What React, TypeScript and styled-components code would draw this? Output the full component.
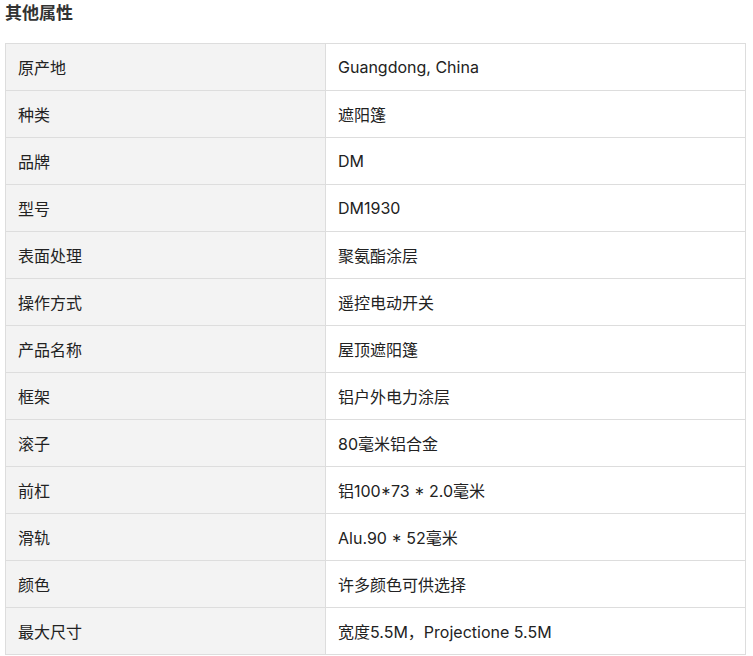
import React from "react";
import styled, { createGlobalStyle } from "styled-components";

const Global = createGlobalStyle`
  html, body { margin: 0; padding: 0; background: #fff; }
  body { font-family: Inter, "Noto Sans CJK SC", sans-serif; color: #333; }
`;

const Page = styled.div`
  padding: 2px 7px 0 5px;
`;

const Title = styled.h3`
  margin: 0 0 19px 0;
  font-size: 17px;
  line-height: 22px;
  font-weight: 700;
  color: #333;
`;

const Table = styled.table`
  width: 741px;
  border-collapse: collapse;
  table-layout: fixed;
`;

const Row = styled.tr``;

const Cell = styled.td<{ $label?: boolean }>`
  height: 46px;
  padding: 0 12px;
  border: 1px solid #ddd;
  font-size: 16px;
  color: #222;
  background: ${(p) => (p.$label ? "#f3f3f3" : "#fff")};
  width: ${(p) => (p.$label ? "295px" : "auto")};
  vertical-align: middle;
`;

const rows: [string, string][] = [
  ["原产地", "Guangdong, China"],
  ["种类", "遮阳篷"],
  ["品牌", "DM"],
  ["型号", "DM1930"],
  ["表面处理", "聚氨酯涂层"],
  ["操作方式", "遥控电动开关"],
  ["产品名称", "屋顶遮阳篷"],
  ["框架", "铝户外电力涂层"],
  ["滚子", "80毫米铝合金"],
  ["前杠", "铝100*73 * 2.0毫米"],
  ["滑轨", "Alu.90 * 52毫米"],
  ["颜色", "许多颜色可供选择"],
  ["最大尺寸", "宽度5.5M，Projectione 5.5M"],
];

export default function App() {
  return (
    <Page>
      <Global />
      <Title>其他属性</Title>
      <Table>
        <tbody>
          {rows.map(([k, v]) => (
            <Row key={k}>
              <Cell $label>{k}</Cell>
              <Cell>{v}</Cell>
            </Row>
          ))}
        </tbody>
      </Table>
    </Page>
  );
}
